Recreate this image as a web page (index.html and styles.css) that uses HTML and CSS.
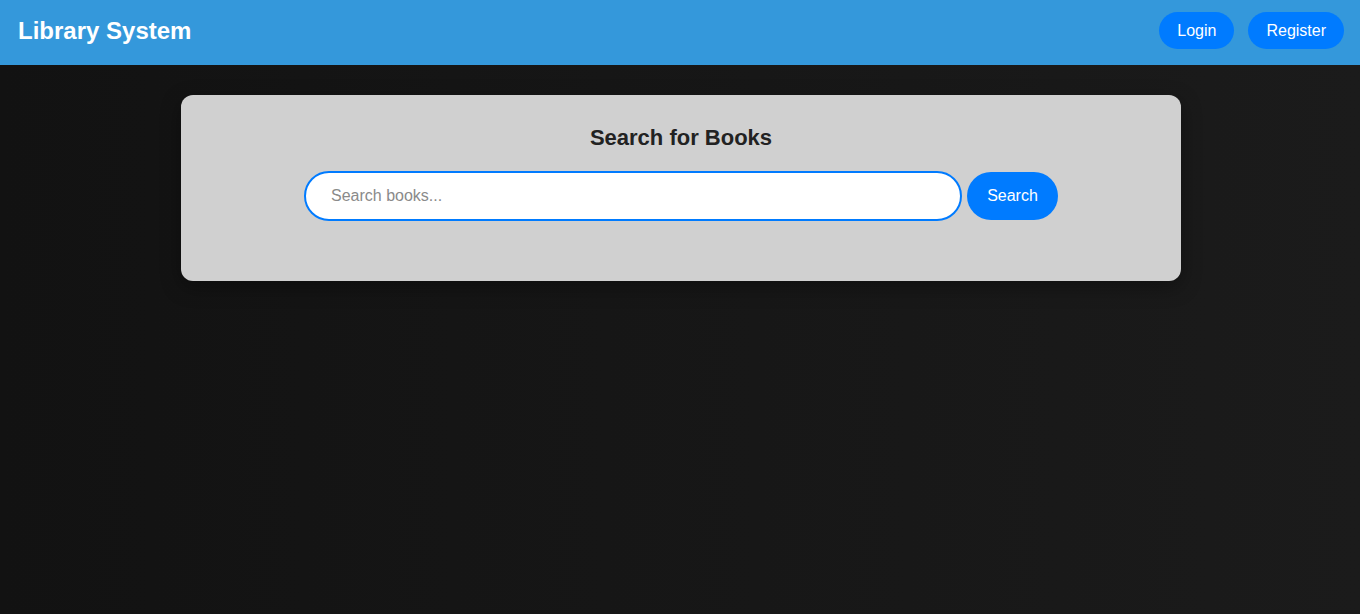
FILE: index.html
```html
<!DOCTYPE html>
<html lang="en">
<head>
<meta charset="utf-8">
<title>Library System</title>
<link rel="stylesheet" href="styles.css">
</head>
<body>
<header class="topbar">
  <h1 class="brand">Library System</h1>
  <nav class="nav">
    <button class="pill">Login</button>
    <button class="pill">Register</button>
  </nav>
</header>
<main class="main">
  <section class="card">
    <h2 class="card-title">Search for Books</h2>
    <form class="search">
      <input class="search-input" type="text" placeholder="Search books...">
      <button class="search-btn" type="button">Search</button>
    </form>
  </section>
</main>
</body>
</html>
```
FILE: styles.css
```css
* { box-sizing: border-box; }
html, body { margin: 0; height: 100%; }
body {
  font-family: "Liberation Sans", Arial, sans-serif;
  background: linear-gradient(to right, #121212, #1b1b1b);
  color: #fff;
}
.topbar {
  height: 65px;
  background: #3498db;
  display: flex;
  align-items: center;
  justify-content: space-between;
  padding: 0 16px 4px 18px;
}
.brand {
  margin: 0;
  font-size: 24px;
  font-weight: bold;
  color: #fff;
}
.nav { display: flex; gap: 14px; }
.pill {
  height: 37px;
  padding: 0 18px;
  border: none;
  border-radius: 20px;
  background: #007bff;
  color: #fff;
  font-family: inherit;
  font-size: 16px;
}
.main {
  display: flex;
  justify-content: center;
  padding: 30px 0 0 2px;
}
.card {
  width: 1000px;
  height: 186px;
  background: #d0d0d0;
  border-radius: 12px;
  box-shadow: 0 6px 20px rgba(0,0,0,0.35);
  padding: 30px 20px 0;
  display: flex;
  flex-direction: column;
  align-items: center;
}
.card-title {
  margin: 0 0 21px;
  font-size: 22px;
  font-weight: bold;
  color: #222;
  line-height: 25px;
}
.search {
  display: flex;
  align-items: center;
  gap: 5px;
  margin: 0;
}
.search-input {
  width: 658px;
  height: 50px;
  border: 2px solid #007bff;
  border-radius: 25px;
  padding: 0 25px;
  font-family: inherit;
  font-size: 16px;
  color: #333;
  background: #fff;
  outline: none;
}
.search-input::placeholder { color: #8a8a8a; }
.search-btn {
  width: 91px;
  height: 48px;
  border: none;
  border-radius: 24px;
  background: #007bff;
  color: #fff;
  font-family: inherit;
  font-size: 16px;
}
```
